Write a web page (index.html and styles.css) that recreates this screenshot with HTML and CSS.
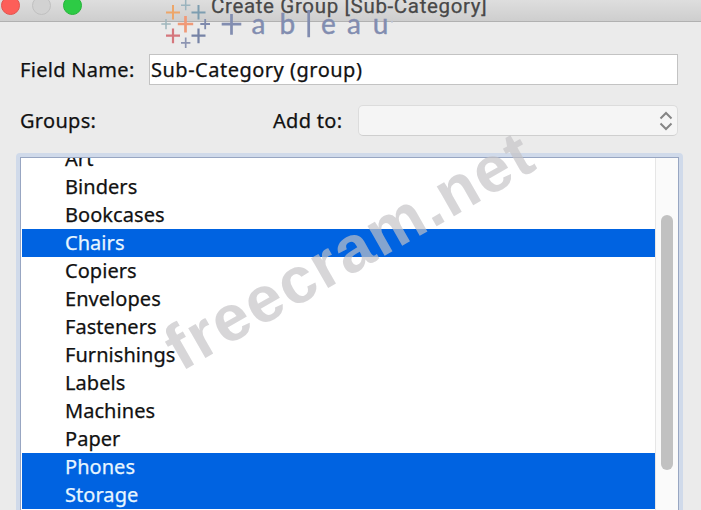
FILE: index.html
```html
<!DOCTYPE html>
<html lang="en">
<head>
  <meta charset="UTF-8">
  <title>Create Group [Sub-Category]</title>
  <link rel="stylesheet" href="styles.css">
</head>
<body>
  <div class="window">
    <div class="titlebar">
      <div class="lights">
        <span class="light red"></span>
        <span class="light gray"></span>
        <span class="light green"></span>
      </div>
      <div class="title">Create Group [Sub-Category]</div>
    </div>

    <div class="content">
      <div class="form-row">
        <label class="name-label" for="field-name">Field Name:</label>
        <input type="text" id="field-name" value="Sub-Category (group)">
      </div>

      <div class="form-row groups-row">
        <span class="groups-label">Groups:</span>
        <span class="add-label">Add to:</span>
        <div class="select">
          <svg width="14" height="20" viewBox="0 0 14 20">
            <path d="M1.5 7.5 L7 2 L12.5 7.5 M1.5 12.5 L7 18 L12.5 12.5"/>
          </svg>
        </div>
      </div>

      <!-- Members of the field -->
      <div class="list">
        <ul class="items">
          <li>Art</li>
          <li>Binders</li>
          <li>Bookcases</li>
          <li class="selected">Chairs</li>
          <li>Copiers</li>
          <li>Envelopes</li>
          <li>Fasteners</li>
          <li>Furnishings</li>
          <li>Labels</li>
          <li>Machines</li>
          <li>Paper</li>
          <li class="selected">Phones</li>
          <li class="selected">Storage</li>
        </ul>
        <div class="scrollbar"><div class="thumb"></div></div>
      </div>
    </div>
  </div>

  <!-- Logo and watermark -->
  <svg class="overlay" width="701" height="510" viewBox="0 0 701 510">
    <g class="logo">
      <path stroke="#f09a78" stroke-width="2.7" d="M177.8 24h15.4M185.5 16v16.4"/>
      <path stroke="#eda669" stroke-width="2" d="M166 12.5h14M173 5v14.5"/>
      <path stroke="#7d9db0" stroke-width="2" d="M191.5 12.5h14M198.5 5v14.5"/>
      <path stroke="#d5777d" stroke-width="2.2" d="M166 35.7h14M173 28.5v14.8"/>
      <path stroke="#7683a6" stroke-width="2.2" d="M191.5 35.7h14M198.5 28.5v14.8"/>
      <path stroke="#9bb4be" stroke-width="1.5" d="M181 5.2h9.4M185.7 0v10.3"/>
      <path stroke="#a0b7bd" stroke-width="1.5" d="M161.3 24h9.5M166 19v10.3"/>
      <path stroke="#7f8aac" stroke-width="1.8" d="M200.3 24h9.7M205.2 19v10.3"/>
      <path stroke="#8d95b2" stroke-width="1.7" d="M181 42.8h9.4M185.7 37.5v10.5"/>
      <path stroke="#828db0" stroke-width="2.7" d="M221.7 24.2h19.6M231.5 14v20.7M308.7 10v27.3"/>
      <text class="logo-text" y="34" x="251.5 279.5 321 347 372.8">abeau</text>
      <circle cx="392" cy="21.8" r="1" fill="#b9c1d2"/>
    </g>
    <text class="watermark" transform="translate(181 372) rotate(-29.7)" textLength="411">freecram.net</text>
  </svg>
</body>
</html>
```
FILE: styles.css
```css
* {
  box-sizing: border-box;
}

body {
  margin: 0;
  width: 701px;
  height: 510px;
  overflow: hidden;
  background: #ebebeb;
  color: #111;
  font-family: "Noto Sans", sans-serif;
  font-size: 20px;
  -webkit-text-stroke: 0.25px;
}

.window {
  height: 510px;
  overflow: hidden;
}

.titlebar {
  display: flex;
  height: 22px;
  background: linear-gradient(#dedede, #cecece);
  border-bottom: 1px solid #b1b1b1;
}

.lights {
  display: flex;
  gap: 12px;
  width: 211px;
  margin-top: -4px;
  padding-left: 1px;
}

.light {
  width: 19px;
  height: 19px;
  border-radius: 50%;
  border: 1px solid #c0c0c0;
}

.red {
  background: #fd5e59;
  border-color: #e2544f;
}

.gray {
  background: #d2d2d2;
}

.green {
  background: #2dcb45;
  border-color: #27b43b;
}

.title {
  margin-top: -7px;
  color: #484848;
  font-family: Roboto, sans-serif;
  font-size: 20.5px;
  line-height: 26px;
  letter-spacing: 0.65px;
  white-space: nowrap;
}

.content {
  padding: 32px 18px 0 16px;
}

.form-row {
  display: flex;
  height: 31px;
  padding: 0 4px;
  margin-right: 1px;
  line-height: 31px;
  letter-spacing: 0.3px;
}

.name-label {
  width: 129px;
}

input {
  flex: 1;
  height: 31px;
  padding: 0 1px;
  border: 1px solid #c3c3c3;
  background: #fff;
  color: #111;
  font: inherit;
  letter-spacing: 0.5px;
}

.groups-row {
  margin-top: 20px;
}

.groups-label {
  width: 253px;
}

.add-label {
  width: 85px;
}

.select {
  display: flex;
  flex: 1;
  align-items: center;
  justify-content: flex-end;
  padding-right: 4px;
  border: 1px solid #dcdcdc;
  border-bottom-color: #cfcfcf;
  border-radius: 5px;
  background: #f5f5f5;
}

.select svg {
  fill: none;
  stroke: #858585;
  stroke-width: 2;
}

.list {
  display: flex;
  height: 380px;
  margin-top: 17px;
  border: 4px solid #d0daea;
  border-radius: 4px;
  box-shadow: inset 0 0 0 1px #98a6c2;
  background: #fff;
  padding: 1px 1px 1px 2px;
  overflow: hidden;
}

.items {
  flex: 1;
  height: 374px;
  margin: 0;
  padding: 0;
  list-style: none;
  overflow: hidden;
}

.items li {
  height: 28px;
  padding-left: 43px;
  line-height: 28px;
  letter-spacing: 0.05px;
}

.items li:first-child {
  margin-top: -13px;
}

.items .selected {
  background: #0063e1;
  color: #e8f6ff;
}

.scrollbar {
  width: 23px;
  padding: 57px 5px 0;
  border-left: 1px solid #e6e6e6;
  background: #fafafa;
}

.thumb {
  width: 12px;
  height: 255px;
  border-radius: 6px;
  background: #c1c1c1;
}

.overlay {
  position: absolute;
  top: 0;
  left: 0;
  pointer-events: none;
  -webkit-text-stroke: 0;
}

.logo path {
  fill: none;
}

.logo-text {
  fill: #828db0;
  stroke: #828db0;
  stroke-width: 0.4px;
  font-family: Lato, sans-serif;
  font-size: 28px;
}

.watermark {
  fill: rgba(196, 194, 198, 0.68);
  font-family: "Liberation Sans", Arial, sans-serif;
  font-size: 65px;
  font-weight: bold;
}
```
